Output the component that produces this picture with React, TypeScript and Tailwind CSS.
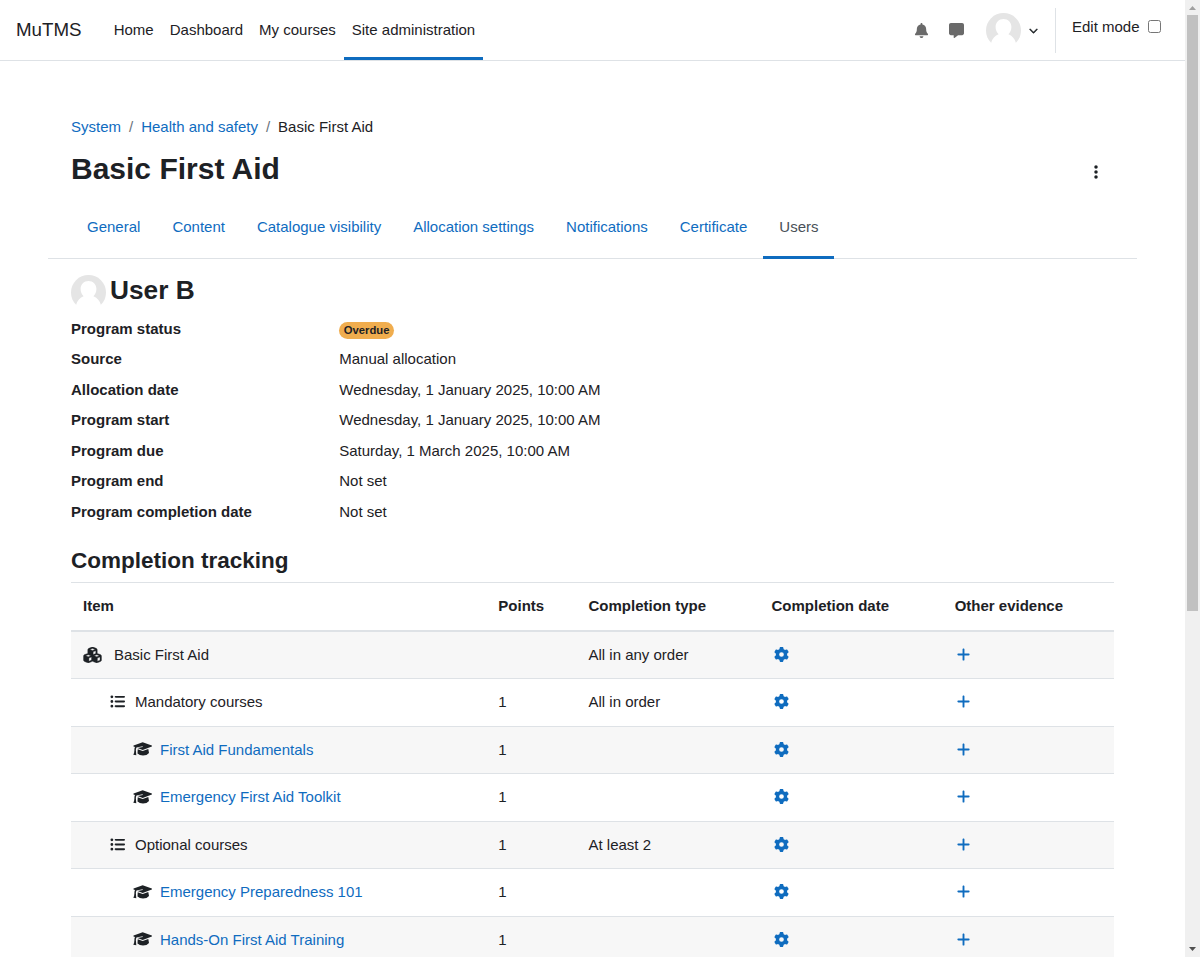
import React from 'react';
import {
  FaBell,
  FaMessage,
  FaChevronDown,
  FaEllipsisVertical,
  FaCubes,
  FaListUl,
  FaGear,
  FaPlus,
} from 'react-icons/fa6';

const navItems = ['Home', 'Dashboard', 'My courses', 'Site administration'];
const tabs = ['General', 'Content', 'Catalogue visibility', 'Allocation settings', 'Notifications', 'Certificate', 'Users'];

const details: [string, string][] = [
  ['Source', 'Manual allocation'],
  ['Allocation date', 'Wednesday, 1 January 2025, 10:00 AM'],
  ['Program start', 'Wednesday, 1 January 2025, 10:00 AM'],
  ['Program due', 'Saturday, 1 March 2025, 10:00 AM'],
  ['Program end', 'Not set'],
  ['Program completion date', 'Not set'],
];

type Item = { kind: 'root' | 'set' | 'course'; name: string; points: string; type: string };

const items: Item[] = [
  { kind: 'root', name: 'Basic First Aid', points: '', type: 'All in any order' },
  { kind: 'set', name: 'Mandatory courses', points: '1', type: 'All in order' },
  { kind: 'course', name: 'First Aid Fundamentals', points: '1', type: '' },
  { kind: 'course', name: 'Emergency First Aid Toolkit', points: '1', type: '' },
  { kind: 'set', name: 'Optional courses', points: '1', type: 'At least 2' },
  { kind: 'course', name: 'Emergency Preparedness 101', points: '1', type: '' },
  { kind: 'course', name: 'Hands-On First Aid Training', points: '1', type: '' },
];

const columns = 'grid grid-cols-[415.3px_90.2px_183px_183.2px_1fr]';

function Avatar() {
  return (
    <svg width="35" height="35" viewBox="0 0 35 35" className="shrink-0">
      <circle cx="17.5" cy="17.5" r="17.5" fill="#e5e5e5" />
      <path
        d="M17.5 6c4.5 0 7.9 3.4 7.9 8 0 3-1.200 5.600-3 7.200 3.600 1.200 6.300 4.400 7.400 8.300V35H5.200v-5.500c1.100-3.900 3.800-7.100 7.400-8.300-1.800-1.600-3-4.200-3-7.200 0-4.600 3.400-8 7.900-8z"
        fill="#fff"
      />
    </svg>
  );
}

function CourseIcon() {
  return (
    <svg width="19" height="14" viewBox="0 0 19 14" fill="currentColor" className="mb-px shrink-0">
      <path d="M9.700.3l9.100 3.300q.4.400 0 .8L9.700 8 4.500 6l5.300-1-.2-.8-6.100 1.200q-.7 1.100-.6 3.100l.4 4.800-3-.6q1.100-2.200 1.100-4.200-.1-2.200.6-3.500L.6 4.400q-.4-.4 0-.8z" />
      <path d="M4.700 7.200l5 1.900L15.300 7l.7 4q-2 2.500-6 2.600-3.500-.1-5.500-2.100z" />
    </svg>
  );
}

function ItemName({ item }: { item: Item }) {
  if (item.kind === 'root') {
    return (
      <div className="flex items-center pl-3">
        <FaCubes className="mb-px h-[16px] w-[19px] stroke-current stroke-[10px]" />
        <span className="ml-3">{item.name}</span>
      </div>
    );
  }
  if (item.kind === 'set') {
    return (
      <div className="flex items-center pl-[39px]">
        <FaListUl className="mb-px size-[15px]" />
        <span className="ml-[10px]">{item.name}</span>
      </div>
    );
  }
  return (
    <div className="flex items-center pl-[62px]">
      <CourseIcon />
      <a className="ml-2 text-[#0f6cbf]">{item.name}</a>
    </div>
  );
}

function Header() {
  return (
    <header className="flex h-[61px] shrink-0 border-b border-[#dee2e6] pl-4">
      <div className="flex h-[60px] w-[89.7px] items-center text-[18.75px]">MuTMS</div>
      <nav className="flex h-[60px]">
        {navItems.map((label, i) => (
          <a
            key={label}
            className={`flex items-center border-b-[3px] px-2 pt-[3px] ${i === 3 ? 'border-[#0f6cbf]' : 'border-transparent'}`}
          >
            {label}
          </a>
        ))}
      </nav>
      <div className="ml-auto flex h-[60px]">
        <div className="flex items-center text-[#6a6a6a]">
          <FaBell className="mr-[19.5px] size-[15px]" />
          <FaMessage className="mr-[22.5px] size-[15px]" />
          <Avatar />
        </div>
        <FaChevronDown className="mt-[26px] ml-[8px] size-[9px] stroke-current stroke-[20px]" />
        <div className="mt-2 ml-[17px] h-[45px] w-px bg-[#dee2e6]" />
        <label className="mt-[16px] mr-6 ml-[15.5px] flex h-[22px] items-center">
          Edit mode
          <input type="checkbox" className="mb-[2px] ml-[8.5px] size-[13px]" />
        </label>
      </div>
    </header>
  );
}

export default function App() {
  return (
    <div className="flex h-[957px] w-[1200px] overflow-hidden bg-white font-['Liberation_Sans',Arial,sans-serif] text-[15px] leading-[22.5px] text-[#1d2125]">
      <div className="flex h-full w-[1185px] flex-col overflow-hidden">
        <Header />
        <main className="shrink-0 px-12 pt-[55px]">
          <div className="flex px-[23px]">
            <a className="text-[#0f6cbf]">System</a>
            <span className="px-2 text-[#6a737b]">/</span>
            <a className="text-[#0f6cbf]">Health and safety</a>
            <span className="px-2 text-[#6a737b]">/</span>
            <span>Basic First Aid</span>
          </div>
          <div className="mt-[12px] flex h-[36px] items-center justify-between px-[23px]">
            <h1 className="text-[30px] leading-9 font-bold">Basic First Aid</h1>
            <FaEllipsisVertical className="mt-1.5 mr-[10px] size-4" />
          </div>
          <nav className="mt-[9px] flex h-[63px] border-b border-[#dee2e6] px-[23px]">
            {tabs.map((label) => (
              <a
                key={label}
                className={
                  label === 'Users'
                    ? 'h-[63px] border-b-[3px] border-[#0f6cbf] px-4 pt-5 text-[#495057]'
                    : 'h-[63px] px-4 pt-5 text-[#0f6cbf]'
                }
              >
                {label}
              </a>
            ))}
          </nav>
          <div className="px-[23px]">
            <div className="mt-4 flex h-[35px]">
              <Avatar />
              <h2 className="ml-1 text-[26.25px] leading-[31px] font-bold">User B</h2>
            </div>
            <dl className="mt-[8px]">
              <div className="flex h-[30.5px]">
                <dt className="w-[268.25px] font-bold">Program status</dt>
                <dd className="pt-[4px]">
                  <span className="flex h-[17px] items-center rounded-full bg-[#f0ad4e] px-[4.5px] pt-px text-[11.25px] leading-none font-bold">Overdue</span>
                </dd>
              </div>
              {details.map(([term, value]) => (
                <div key={term} className="flex h-[30.5px]">
                  <dt className="w-[268.25px] font-bold">{term}</dt>
                  <dd>{value}</dd>
                </div>
              ))}
            </dl>
            <h3 className="mt-[16px] h-[35px] text-[22.5px] leading-[27px] font-bold">Completion tracking</h3>
            <div className="w-[1043px]">
              <div className={`${columns} h-[50px] items-center border-t border-b-2 border-[#dee2e6] font-bold`}>
                <div className="pl-3">Item</div>
                <div className="pl-3">Points</div>
                <div className="pl-3">Completion type</div>
                <div className="pl-3">Completion date</div>
                <div className="pl-3">Other evidence</div>
              </div>
              {items.map((item, i) => (
                <div
                  key={item.name}
                  className={`${columns} items-center ${i === 0 ? 'h-[46px]' : 'h-[47.5px] border-t border-[#dee2e6]'} ${i % 2 === 0 ? 'bg-[#f7f7f7]' : ''}`}
                >
                  <ItemName item={item} />
                  <div className="pl-3">{item.points}</div>
                  <div className="pl-3">{item.type}</div>
                  <div className="pb-px pl-[14.4px] text-[#0f6cbf]">
                    <FaGear className="size-[15px]" />
                  </div>
                  <div className="pb-[1.5px] pl-[13.5px] text-[#0f6cbf]">
                    <FaPlus className="size-[15px]" />
                  </div>
                </div>
              ))}
            </div>
          </div>
        </main>
      </div>
      <div className="flex w-[15px] flex-col items-center bg-[#f0f0f0]">
        <svg width="15" height="15" viewBox="0 0 15 15">
          <path d="M4 10h7L7.500 6z" fill="#a0a0a0" />
        </svg>
        <div className="h-[596px] w-[11px] bg-[#c1c1c1]" />
        <svg width="15" height="15" viewBox="0 0 15 15" className="mt-auto">
          <path d="M4 5h7L7.500 9z" fill="#505050" />
        </svg>
      </div>
    </div>
  );
}
